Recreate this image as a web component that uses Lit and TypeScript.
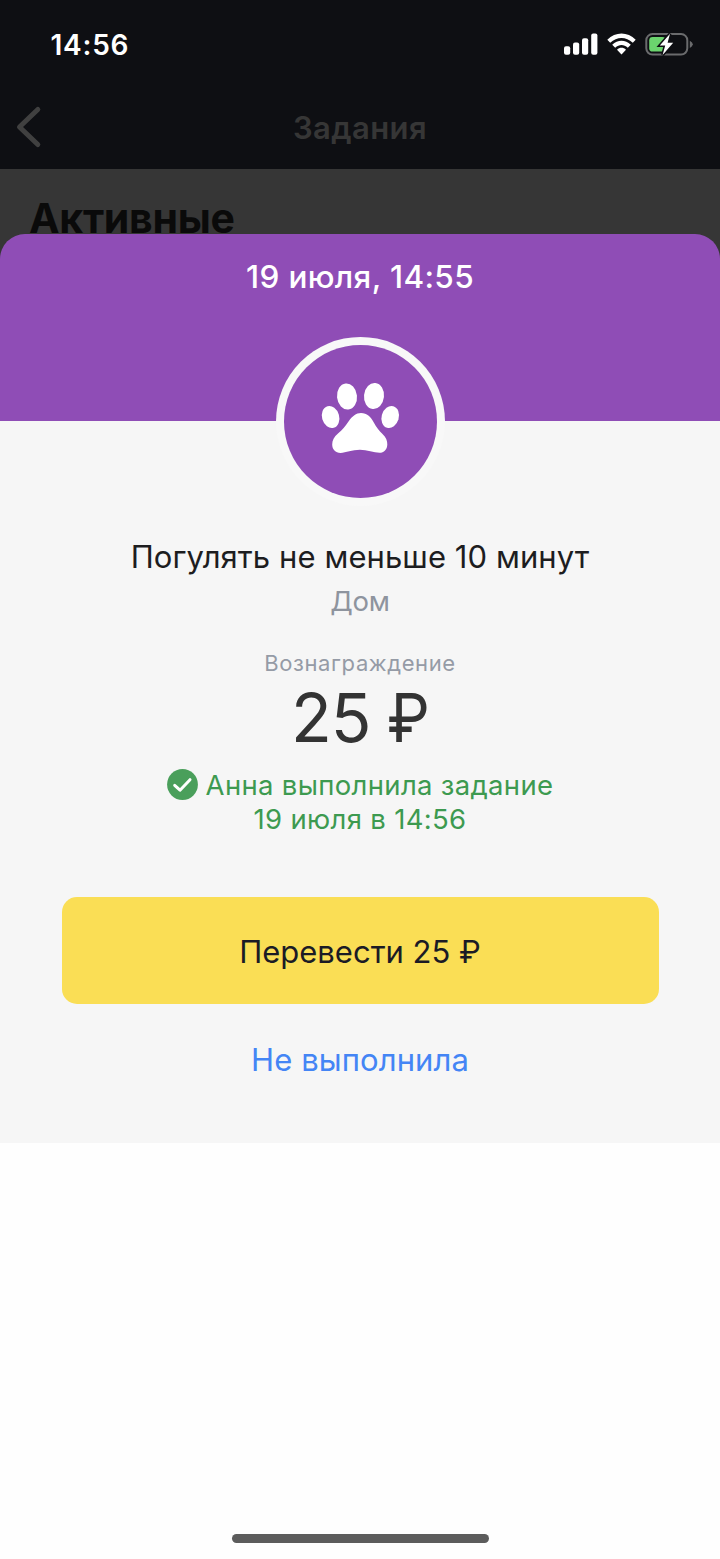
import { LitElement, html, css } from "lit";
import { customElement } from "lit/decorators.js";

@customElement("status-bar")
class StatusBar extends LitElement {
  static styles = css`
    :host { display: flex; height: 88px; box-sizing: border-box; padding: 0 27px 0 50.5px; justify-content: space-between; align-items: center; color: #fff; }
    .time { font-size: 28px; font-weight: 600; line-height: 34px; letter-spacing: 0.75px; padding-top: 2px; }
    svg { display: block; }
  `;
  render() {
    return html`
      <span class="time">14:56</span>
      <svg width="130" height="26" viewBox="563 31 130 26">
        <g fill="#fff">
          <rect x="564" y="46.2" width="6.2" height="8.6" rx="2" />
          <rect x="573" y="42.6" width="6.2" height="12.2" rx="2" />
          <rect x="582" y="38.2" width="6.2" height="16.6" rx="2" />
          <rect x="591.2" y="33.6" width="6.2" height="21.2" rx="2" />
          <path d="M607.3 39.7C615.4 31.5 627.6 31.5 635.7 39.7L632.8 42.8C626 36.3 617 36.3 610.2 42.8Z" />
          <path d="M612.2 44.7C617.6 39.4 625.4 39.4 630.8 44.7L627.8 47.8C623.8 44 619.2 44 615.2 47.8Z" />
          <path d="M617 49.7C619.7 47.2 623.3 47.2 626 49.7L621.5 54.6Z" />
        </g>
        <rect x="646.3" y="34.1" width="41" height="20.4" rx="6.2" fill="none" stroke="#6a6b6d" stroke-width="2" />
        <path d="M689.8 40.7Q692.8 42.3 692.8 44.3T689.8 47.9Z" fill="#6a6b6d" />
        <rect x="649.2" y="37" width="16.5" height="14.6" rx="3.4" fill="#6bd46e" />
        <path d="M670 33.8L659.8 45.4H665.2L662.6 55L673.2 42.8H667.6Z" fill="#fff" stroke="#0e0f13" stroke-width="3" paint-order="stroke" />
      </svg>
    `;
  }
}

@customElement("task-badge")
class TaskBadge extends LitElement {
  static styles = css`
    :host { display: block; width: 169px; height: 169px; }
    svg { display: block; }
  `;
  render() {
    return html`
      <svg width="169" height="169" viewBox="276 337 169 169">
        <circle cx="360.5" cy="421.5" r="84.5" fill="#f8f8f8" />
        <circle cx="360.5" cy="421.5" r="76.5" fill="#8f4db6" />
        <g fill="#fff">
          <ellipse cx="347" cy="396.5" rx="10" ry="13" transform="rotate(-6 347 396.5)" />
          <ellipse cx="374" cy="396" rx="10" ry="13" transform="rotate(6 374 396)" />
          <ellipse cx="330.6" cy="417" rx="8.6" ry="11.2" transform="rotate(-16 330.6 417)" />
          <ellipse cx="390.2" cy="417" rx="8.6" ry="11.2" transform="rotate(16 390.2 417)" />
          <path d="M361 413C367 413 370.5 416.5 373.5 422C376.5 427.5 379 430.5 382.5 434C386 437.5 387.4 440.5 387.3 444.5C387.2 449.5 384 452.8 379.5 452.8C374 452.8 367 449.8 360 449.8C352 449.8 346 452.9 340.5 452.9C335.5 452.9 332.2 449.5 332.2 444.5C332.2 440 334 437 338 433.5C342.5 429.5 345 426.5 348.5 421.5C352.5 416 356 413 361 413Z" />
        </g>
      </svg>
    `;
  }
}

@customElement("app-root")
class AppRoot extends LitElement {
  static styles = css`
    :host { display: flex; flex-direction: column; height: 1559px; overflow: hidden; background: #fefefe; font-family: Inter, "Noto Sans", sans-serif; text-align: center; }
    .top { background: #0e0f13; height: 169px; }
    .nav { display: grid; grid-template-columns: 60px 1fr 60px; align-items: center; height: 78px; }
    .nav svg { display: block; margin-left: 15px; }
    .nav-title { font-size: 31px; font-weight: 600; line-height: 40px; letter-spacing: 0.4px; padding-top: 2px; color: #363636; }
    .behind { background: #363636; height: 95px; box-sizing: border-box; padding: 24px 29px 0; text-align: left; }
    .section { font-size: 41px; line-height: 50px; font-weight: 700; letter-spacing: -0.3px; color: #0a0a0a; }
    .sheet { position: relative; margin-top: -30px; height: 909px; border-radius: 25px 25px 0 0; background: linear-gradient(#8f4db6 187px, #f6f6f6 187px); display: flex; flex-direction: column; align-items: center; }
    .banner { align-self: stretch; height: 187px; flex: none; color: #fff; box-sizing: border-box; padding-top: 23px; }
    .date { font-size: 31.5px; font-weight: 500; line-height: 40px; letter-spacing: 0.35px; }
    task-badge { margin-top: -84px; flex: none; }
    .title { margin-top: 31px; font-size: 31px; line-height: 40px; letter-spacing: 0.08px; color: #1d1d1f; white-space: nowrap; }
    .place { margin-top: 6px; font-size: 27.5px; line-height: 36px; letter-spacing: -0.2px; color: #8e949e; }
    .label { margin-top: 29px; font-size: 22px; line-height: 30px; letter-spacing: 0.6px; color: #959ba6; }
    .amount { font-size: 67px; line-height: 80px; letter-spacing: -1.2px; word-spacing: 1px; color: #333; display: flex; gap: 17px; padding-left: 0; }
    .currency { display: block; transform: scaleX(0.91); transform-origin: left; margin-right: -4px; }
    .done { margin-top: 9.5px; display: flex; flex-direction: column; align-items: center; font-size: 27.5px; line-height: 34px; letter-spacing: 0.32px; color: #3d9a50; }
    .done-row { display: flex; align-items: center; gap: 8px; height: 34px; }
    .done svg { display: block; }
    .transfer { margin-top: 61.5px; width: 597px; height: 107px; flex: none; border: 0; border-radius: 15px; background: #fade55; font: 400 31px/40px Inter, "Noto Sans", sans-serif; color: #1b1b25; padding: 2px 0 0; }
    .reject { margin-top: 35px; border: 0; background: none; padding: 1px 0 0; font: 400 31px/40px Inter, "Noto Sans", sans-serif; letter-spacing: 0.1px; color: #4485f5; }
    .home { width: 257px; height: 9px; border-radius: 5px; background: #5c5c5c; margin: auto auto 16px; }
  `;
  render() {
    return html`
      <div class="top">
        <status-bar></status-bar>
        <nav class="nav">
          <svg width="28" height="44" viewBox="15 105 28 44" fill="none" stroke="#404040" stroke-width="5" stroke-linecap="round" stroke-linejoin="round">
            <path d="M37.8 109.5L19.5 127L37.8 144.5" />
          </svg>
          <span class="nav-title">Задания</span>
        </nav>
      </div>
      <div class="behind"><div class="section">Активные</div></div>
      <section class="sheet">
        <div class="banner"><div class="date">19 июля, 14:55</div></div>
        <task-badge></task-badge>
        <div class="title">Погулять не меньше 10 минут</div>
        <div class="place">Дом</div>
        <div class="label">Вознаграждение</div>
        <div class="amount"><span>25</span> <span class="currency">₽</span></div>
        <div class="done">
          <div class="done-row">
            <svg width="31" height="31" viewBox="0 0 31 31">
              <circle cx="15.5" cy="15.5" r="15.4" fill="#4a9f5b" />
              <path d="M7.7 16.3L13 21.2L23 10.7" fill="none" stroke="#fff" stroke-width="3" stroke-linecap="round" stroke-linejoin="round" />
            </svg>
            <span>Анна выполнила задание</span>
          </div>
          <span>19 июля в 14:56</span>
        </div>
        <button class="transfer">Перевести 25 ₽</button>
        <button class="reject">Не выполнила</button>
      </section>
      <div class="home"></div>
    `;
  }
}
